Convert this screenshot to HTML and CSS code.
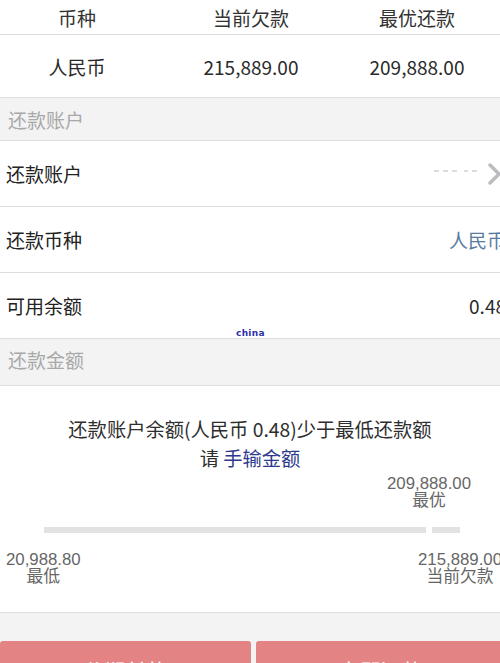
FILE: index.html
```html
<!DOCTYPE html>
<html>
<head>
    <title>还款</title>
    <link rel="stylesheet" href="styles.css">
</head>
<body>
    <div class="page">
        <div class="table-head">
            <span>币种</span>
            <span>当前欠款</span>
            <span>最优还款</span>
        </div>
        <div class="table-row">
            <span>人民币</span>
            <span>215,889.00</span>
            <span>209,888.00</span>
        </div>

        <div class="section-title sec-account">还款账户</div>
        <div class="item">
            <span class="label">还款账户</span>
            <span class="value">
                <svg class="mask" width="46" height="6" viewBox="0 0 46 6">
                    <g stroke="#d4d4d4" stroke-width="1.6">
                        <line x1="0" y1="3" x2="5" y2="3"/>
                        <line x1="9" y1="3" x2="14" y2="3"/>
                        <line x1="18" y1="3" x2="23" y2="3"/>
                        <line x1="30" y1="3" x2="34" y2="3"/>
                        <line x1="38" y1="3" x2="43" y2="3"/>
                    </g>
                </svg>
                <svg class="chevron" width="14" height="22" viewBox="0 0 14 22">
                    <polyline points="2,2 11,11 2,20" fill="none" stroke="#bcbcc0" stroke-width="3.4" stroke-linecap="round" stroke-linejoin="round"/>
                </svg>
            </span>
        </div>
        <div class="item">
            <span class="label">还款币种</span>
            <span class="value currency">人民币</span>
        </div>
        <div class="item item-balance">
            <span class="label">可用余额</span>
            <span class="value amount">0.48</span>
            <span class="watermark">china</span>
        </div>

        <div class="section-title sec-amount">还款金额</div>
        <div class="amount-box">
            <p class="notice">还款账户余额(人民币 0.48)少于最低还款额</p>
            <p class="notice">请 <a class="manual">手输金额</a></p>
            <div class="best">
                <div class="mark">209,888.00<br>最优</div>
            </div>
            <div class="track">
                <span class="thumb"></span>
            </div>
            <div class="ends">
                <div class="mark">20,988.80<br>最低</div>
                <div class="mark">215,889.00<br>当前欠款</div>
            </div>
        </div>

        <div class="footer">
            <button class="btn">分期付款</button>
            <button class="btn">立即还款</button>
        </div>
    </div>
</body>
</html>
```

FILE: styles.css
```css
html, body {
    margin: 0;
    padding: 0;
    overflow: hidden;
}
body {
    font-family: "Noto Sans CJK SC", "Noto Sans", sans-serif;
    color: #222;
    background: #fff;
}
.page {
    width: 506px;
}
.table-head, .table-row {
    display: grid;
    grid-template-columns: 154px 194px 138px;
    align-items: center;
    text-align: center;
    box-sizing: border-box;
    border-bottom: 1px solid #dedede;
    font-size: 19px;
}
.table-head {
    height: 35px;
    color: #333;
}
.table-row {
    height: 63px;
    color: #2a2a2a;
}
.table-head span, .table-row span {
    line-height: 1;
    white-space: nowrap;
}
.section-title {
    display: flex;
    align-items: center;
    box-sizing: border-box;
    padding-left: 8px;
    background: #f3f3f3;
    border-bottom: 1px solid #dedede;
    color: #a8a8a8;
    font-size: 19px;
}
.sec-account {
    height: 43px;
}
.sec-amount {
    height: 47px;
    padding-bottom: 5px;
}
.item {
    display: flex;
    align-items: center;
    justify-content: space-between;
    height: 66px;
    box-sizing: border-box;
    padding-left: 6px;
    border-bottom: 1px solid #dedede;
    font-size: 19px;
}
.item-balance {
    position: relative;
}
.value {
    display: flex;
    align-items: center;
}
.mask {
    margin-right: 8px;
    margin-top: -6px;
}
.chevron {
    margin-right: 4px;
}
.currency {
    color: #5a7b9f;
}
.amount {
    color: #2a2a2a;
}
.watermark {
    position: absolute;
    left: 236px;
    bottom: 0;
    font-family: "DejaVu Sans", sans-serif;
    font-weight: bold;
    font-size: 9px;
    color: #2b2fa8;
    letter-spacing: 0.3px;
}
.amount-box {
    height: 227px;
    box-sizing: border-box;
    padding-top: 29px;
    border-bottom: 1px solid #dedede;
}
.notice {
    margin: 0;
    text-align: center;
    font-size: 19.3px;
    line-height: 29px;
    color: #2e2e2e;
    padding-right: 6px;
}
.manual {
    color: #2d3a8c;
}
.mark {
    display: inline-block;
    text-align: center;
    font-family: "Liberation Sans", "Noto Sans CJK SC", sans-serif;
    font-size: 16.8px;
    line-height: 17px;
    color: #666;
}
.best {
    display: flex;
    justify-content: flex-end;
    padding-right: 35px;
    margin-top: 2px;
}
.track {
    position: relative;
    height: 6px;
    margin: 18px 46px 0 44px;
    background: #e2e2e2;
}
.thumb {
    position: absolute;
    left: 382px;
    top: -1px;
    width: 6px;
    height: 8px;
    background: #fff;
}
.ends {
    display: flex;
    justify-content: space-between;
    padding: 0 4px 0 6px;
    margin-top: 18px;
}
.footer {
    display: flex;
    gap: 5px;
    background: #f3f3f3;
    padding-top: 28px;
}
.btn {
    flex: 1;
    height: 50px;
    border: none;
    border-radius: 3px;
    background: #e48383;
    color: #fff;
    font-family: "Noto Sans CJK SC", sans-serif;
    font-size: 21px;
    padding-top: 8px;
}
```
